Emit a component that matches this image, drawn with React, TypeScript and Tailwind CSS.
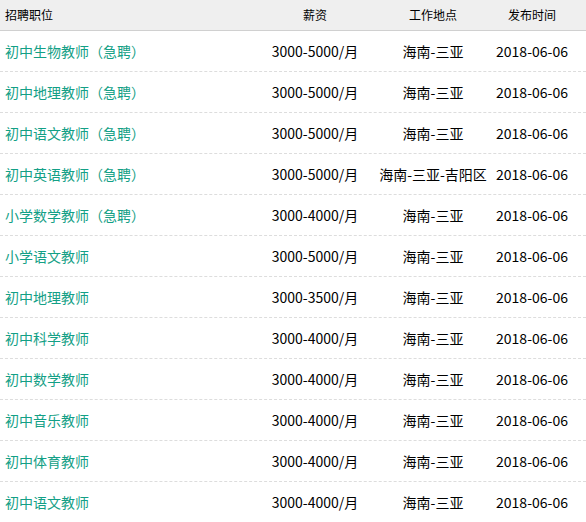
const jobs = [
  { title: '初中生物教师（急聘）', salary: '3000-5000/月', place: '海南-三亚' },
  { title: '初中地理教师（急聘）', salary: '3000-5000/月', place: '海南-三亚' },
  { title: '初中语文教师（急聘）', salary: '3000-5000/月', place: '海南-三亚' },
  { title: '初中英语教师（急聘）', salary: '3000-5000/月', place: '海南-三亚-吉阳区' },
  { title: '小学数学教师（急聘）', salary: '3000-4000/月', place: '海南-三亚' },
  { title: '小学语文教师', salary: '3000-5000/月', place: '海南-三亚' },
  { title: '初中地理教师', salary: '3000-3500/月', place: '海南-三亚' },
  { title: '初中科学教师', salary: '3000-4000/月', place: '海南-三亚' },
  { title: '初中数学教师', salary: '3000-4000/月', place: '海南-三亚' },
  { title: '初中音乐教师', salary: '3000-4000/月', place: '海南-三亚' },
  { title: '初中体育教师', salary: '3000-4000/月', place: '海南-三亚' },
  { title: '初中语文教师', salary: '3000-4000/月', place: '海南-三亚' },
];

const cols = 'grid grid-cols-[255px_120px_116px_82px]';

export default function App() {
  return (
    <div className="w-[586px] bg-white text-black font-['Noto_Sans_CJK_SC','Noto_Sans',sans-serif]">
      {/* header */}
      <div className={`${cols} h-[31px] items-center bg-[#efefef] border-b border-[#d0d0d0] text-[12px]`}>
        <div className="pl-[5px]">招聘职位</div>
        <div className="text-center">薪资</div>
        <div className="text-center">工作地点</div>
        <div className="text-center">发布时间</div>
      </div>

      {/* rows */}
      {jobs.map((job, i) => (
        <div
          key={i}
          className={`${cols} h-[41px] items-center border-b border-dashed border-[#dddddd] text-[14px]`}
        >
          <a href="#" className="pl-[5px] text-[#13a086] whitespace-nowrap">{job.title}</a>
          <div className="text-center whitespace-nowrap">{job.salary}</div>
          <div className="text-center whitespace-nowrap">{job.place}</div>
          <div className="text-center whitespace-nowrap">2018-06-06</div>
        </div>
      ))}
    </div>
  );
}
